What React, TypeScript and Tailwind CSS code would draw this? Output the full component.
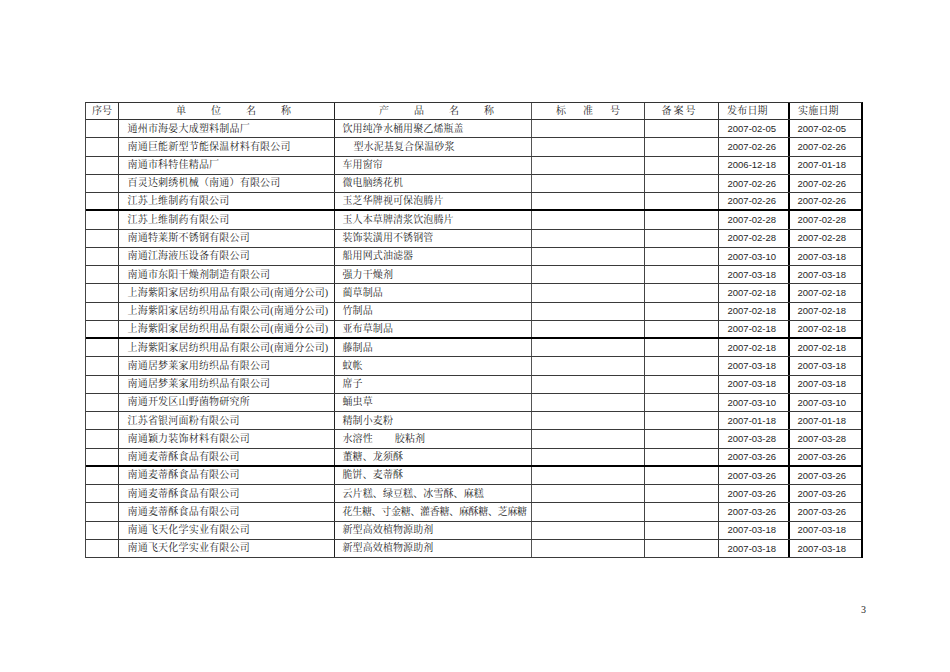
import React from "react";

type Row = { name: string; product: React.ReactNode; pub: string; eff: string; thick?: boolean };

const rows: Row[] = [
  { name: "通州市海晏大成塑料制品厂", product: "饮用纯净水桶用聚乙烯瓶盖", pub: "2007-02-05", eff: "2007-02-05" },
  { name: "南通巨能新型节能保温材料有限公司", product: <span className="pl-[11px]">型水泥基复合保温砂浆</span>, pub: "2007-02-26", eff: "2007-02-26" },
  { name: "南通市科特佳精品厂", product: "车用窗帘", pub: "2006-12-18", eff: "2007-01-18" },
  { name: "百灵达刺绣机械（南通）有限公司", product: "微电脑绣花机", pub: "2007-02-26", eff: "2007-02-26" },
  { name: "江苏上维制药有限公司", product: "玉芝华牌视可保泡腾片", pub: "2007-02-26", eff: "2007-02-26", thick: true },
  { name: "江苏上维制药有限公司", product: "玉人本草牌清浆饮泡腾片", pub: "2007-02-28", eff: "2007-02-28" },
  { name: "南通特莱斯不锈钢有限公司", product: "装饰装潢用不锈钢管", pub: "2007-02-28", eff: "2007-02-28" },
  { name: "南通江海液压设备有限公司", product: "船用网式油滤器", pub: "2007-03-10", eff: "2007-03-18" },
  { name: "南通市东阳干燥剂制造有限公司", product: "强力干燥剂", pub: "2007-03-18", eff: "2007-03-18" },
  { name: "上海紫阳家居纺织用品有限公司(南通分公司)", product: "蔺草制品", pub: "2007-02-18", eff: "2007-02-18" },
  { name: "上海紫阳家居纺织用品有限公司(南通分公司)", product: "竹制品", pub: "2007-02-18", eff: "2007-02-18" },
  { name: "上海紫阳家居纺织用品有限公司(南通分公司)", product: "亚布草制品", pub: "2007-02-18", eff: "2007-02-18", thick: true },
  { name: "上海紫阳家居纺织用品有限公司(南通分公司)", product: "藤制品", pub: "2007-02-18", eff: "2007-02-18" },
  { name: "南通居梦莱家用纺织品有限公司", product: "蚊帐", pub: "2007-03-18", eff: "2007-03-18" },
  { name: "南通居梦莱家用纺织品有限公司", product: "席子", pub: "2007-03-18", eff: "2007-03-18" },
  { name: "南通开发区山野菌物研究所", product: "蛹虫草", pub: "2007-03-10", eff: "2007-03-10" },
  { name: "江苏省银河面粉有限公司", product: "精制小麦粉", pub: "2007-01-18", eff: "2007-01-18" },
  {
    name: "南通颖力装饰材料有限公司",
    product: (
      <span className="flex gap-[22px]">
        <span>水溶性</span>
        <span>胶粘剂</span>
      </span>
    ),
    pub: "2007-03-28",
    eff: "2007-03-28",
  },
  { name: "南通麦蒂酥食品有限公司", product: "董糖、龙须酥", pub: "2007-03-26", eff: "2007-03-26", thick: true },
  { name: "南通麦蒂酥食品有限公司", product: "脆饼、麦蒂酥", pub: "2007-03-26", eff: "2007-03-26" },
  { name: "南通麦蒂酥食品有限公司", product: "云片糕、绿豆糕、冰雪酥、麻糕", pub: "2007-03-26", eff: "2007-03-26" },
  {
    name: "南通麦蒂酥食品有限公司",
    product: <span className="tracking-[-0.3px]">花生糖、寸金糖、灌香糖、麻酥糖、芝麻糖</span>,
    pub: "2007-03-26",
    eff: "2007-03-26",
  },
  { name: "南通飞天化学实业有限公司", product: "新型高效植物源助剂", pub: "2007-03-18", eff: "2007-03-18" },
  { name: "南通飞天化学实业有限公司", product: "新型高效植物源助剂", pub: "2007-03-18", eff: "2007-03-18" },
];

const cjk = "font-['Liberation_Serif','Noto_Serif_CJK_SC','Noto_Sans_CJK_SC',serif]";
const grid = "grid grid-cols-[33px_216px_197px_113px_74px_71px_73px]";

export default function App() {
  return (
    <div className="w-[950px] h-[672px] bg-white overflow-hidden text-[#1f1f1f]">
      <div className="pt-[102px] pl-[85px]">
        <div className="w-[778px] border-t border-l border-r-2 border-t-[#333] border-l-[#444] border-r-black">
          {/* header */}
          <div className={`${grid} h-[17px] border-b border-[#333] text-[10px] leading-none ${cjk}`}>
            <div className="border-r border-[#333] flex items-center justify-center">序号</div>
            <div className="border-r border-[#222] flex items-center justify-center gap-[25px] pl-[14px]">
              <span>单</span>
              <span>位</span>
              <span>名</span>
              <span>称</span>
            </div>
            <div className="border-r border-[#555] flex items-center justify-center gap-[25px] pl-[7px]">
              <span>产</span>
              <span>品</span>
              <span>名</span>
              <span>称</span>
            </div>
            <div className="border-r border-[#444] flex items-center justify-center gap-[17px]">
              <span>标</span>
              <span>准</span>
              <span>号</span>
            </div>
            <div className="border-r border-[#333] flex items-center justify-center gap-[2px] pr-[6px]">
              <span>备</span>
              <span>案</span>
              <span>号</span>
            </div>
            <div className="border-r-2 border-black flex items-center pl-[8px] tracking-[0.2px]">发布日期</div>
            <div className="flex items-center pl-[8px] tracking-[0.2px]">实施日期</div>
          </div>
          {rows.map((r, i) => (
            <div
              key={i}
              className={`${grid} h-[18.25px] text-[10px] leading-none ${
                r.thick ? "border-b-2 border-black" : "border-b border-[#3a3a3a]"
              }`}
            >
              <div className="border-r border-[#333]" />
              <div className={`border-r border-[#222] flex items-center pl-[8.5px] tracking-[0.2px] whitespace-nowrap ${cjk}`}>
                {r.name}
              </div>
              <div className={`border-r border-[#555] flex items-center pl-[7.5px] tracking-[0.1px] whitespace-nowrap ${cjk}`}>
                {r.product}
              </div>
              <div className="border-r border-[#444]" />
              <div className="border-r border-[#333]" />
              <div className="border-r-2 border-black flex items-center pl-[8.5px] font-['Liberation_Sans',Arial,sans-serif] text-[9.5px]">
                {r.pub}
              </div>
              <div className="flex items-center pl-[7.5px] font-['Liberation_Sans',Arial,sans-serif] text-[9.5px]">
                {r.eff}
              </div>
            </div>
          ))}
        </div>
        <div className="w-[781px] mt-[47px] text-right text-[10px] leading-none font-['Liberation_Serif',serif]">3</div>
      </div>
    </div>
  );
}
